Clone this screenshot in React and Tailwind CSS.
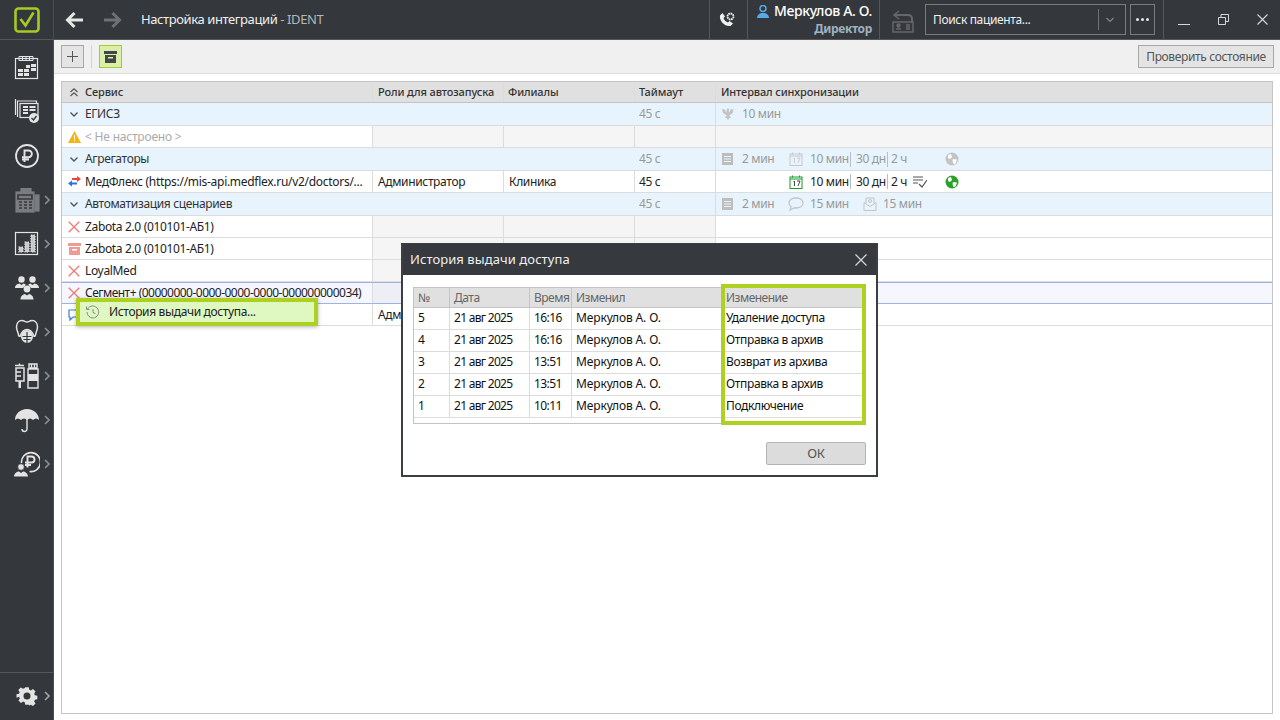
import React from 'react';

const Chev = ({ c = '#8a8d91' }) => (
  <svg width="6" height="10" viewBox="0 0 6 10" fill="none" stroke={c} strokeWidth="1.6"><path d="M1 1l4 4-4 4" /></svg>
);

const NavIcon = ({ children, arrow, dim }) => (
  <div className="h-[44px] relative flex items-center justify-center shrink-0 w-full">
    <div className={dim ? 'w-[26px] h-[26px] ml-[1px] opacity-40' : 'w-[26px] h-[26px] ml-[1px]'}>
      <svg width="26" height="26" viewBox="0 0 26 26" fill="none" stroke="#e4e4e4" strokeWidth="1.2">{children}</svg>
    </div>
    {arrow && <span className="absolute left-[44px] top-[17px]"><Chev /></span>}
  </div>
);

const Sidebar = () => (
  <div className="w-[54px] shrink-0 bg-[#34373c] border-r border-[#4a4d52] flex flex-col h-full">
    <div className="h-[40px] shrink-0 border-b border-[#54575b] flex items-center justify-center">
      <svg width="26" height="26" viewBox="0 0 26 26" fill="none">
        <rect x="1.5" y="1.5" width="23" height="23" rx="3" stroke="#a6cb24" strokeWidth="2.6" />
        <path d="M6.5 12l5 6.5 8-13" stroke="#a6cb24" strokeWidth="2.6" />
      </svg>
    </div>
    <div className="h-[6px] shrink-0" />
    <NavIcon>
      <rect x="1.5" y="3.5" width="22" height="20" />
      <path d="M5 1.500h14v4H5zM8.500 1.500v4M12 1.500v4M15.500 1.500v4" strokeWidth="1" />
      <path d="M12 10h4v3h-4zM17 9h5v3h-5zM4 14h5v3H4zM10 14h5v3h-5zM17 13h5v3h-5zM4 18h5v3H4zM10 18h5v3h-5z" fill="#e4e4e4" stroke="none" />
    </NavIcon>
    <NavIcon>
      <g transform="translate(0 -2)">
        <path d="M1.500 18V1.500h18M3.500 20V4h19v15" />
        <rect x="6" y="6.500" width="18" height="14" fill="#34373c" />
        <path d="M9 10h5M9 13h5M9 16h5M15.500 10h6M15.500 13h6" strokeWidth="1.800" />
        <circle cx="20" cy="21" r="5" fill="#e4e4e4" stroke="none" />
        <path d="M17.500 21l2 2 3-4" stroke="#34373c" strokeWidth="1.400" />
      </g>
    </NavIcon>
    <NavIcon>
      <circle cx="13" cy="13" r="11" strokeWidth="1.800" />
      <path d="M10.500 19V7.500h4a3.300 3.300 0 010 6.700H8M8 16.500h7" strokeWidth="1.900" />
    </NavIcon>
    <NavIcon arrow dim>
      <path d="M7 5V1.500h10V5" fill="#e4e4e4" />
      <rect x="2" y="5" width="18" height="20" fill="#e4e4e4" />
      <rect x="21" y="8" width="4" height="16" fill="#e4e4e4" />
      <path d="M4 8h14v4H4zM5 15h3M10 15h3M15 15h3M5 18h3M10 18h3M15 18h3M5 21h3M10 21h3M15 21h3" stroke="#34373c" strokeWidth="1.600" />
    </NavIcon>
    <NavIcon arrow>
      <rect x="1.500" y="1.500" width="22" height="22" />
      <path d="M5 16h4v5H5zM11 11h4v10h-4zM17 4h4v17h-4z" fill="#c8c8c8" stroke="#e4e4e4" strokeDasharray="1.500 1" />
    </NavIcon>
    <NavIcon arrow>
      <g fill="#e4e4e4" stroke="none">
        <circle cx="7.500" cy="4.500" r="3.200" /><path d="M1 13c0-3 2.500-4 4.500-4.500L7.500 10l2-1.500c1 .3 1.800.7 2.400 1.300L9 13z" />
        <circle cx="18.500" cy="4.500" r="3.200" /><path d="M25 13c0-3-2.500-4-4.500-4.500L18.500 10l-2-1.500c-1 .3-1.800.7-2.400 1.300L17 13z" />
        <circle cx="13" cy="14" r="3.400" /><path d="M6.500 24.500c0-3.500 2.500-5 4.500-5.500l2 1.500 2-1.500c2 .5 4.500 2 4.500 5.500z" />
      </g>
    </NavIcon>
    <NavIcon arrow>
      <path d="M8 1.500c2 0 3.500 1.500 5 1.500s3-1.500 5-1.500c3.500 0 5.500 3 5.500 6.500 0 3-1.500 5-2 8-.2 1-1 1.500-1.800 1-1-3-3-6.500-6.700-6.500S7.300 14 6.300 17c-.8.5-1.600 0-1.800-1-.5-3-2-5-2-8 0-3.500 2-6.500 5.500-6.500z" strokeWidth="1.500" />
      <ellipse cx="13" cy="17.500" rx="6" ry="6.500" fill="#e4e4e4" stroke="none" />
      <path d="M13 13v11M8.500 17.500h9M9.500 20.500h7" stroke="#34373c" />
    </NavIcon>
    <NavIcon arrow>
      <path d="M1 2.500h9M5.500 .5v2M2 5h8v13H2zM2 9h5M2 13h5" strokeWidth="1.500" />
      <path d="M4.500 18h2.500v7H4.500z" fill="#e4e4e4" stroke="none" />
      <path d="M15 1h8v4h-8zM14 6h10v19H14zM17.500 1v4M20.500 1v4" strokeWidth="1.400" />
      <rect x="14" y="11" width="10" height="7" fill="#e4e4e4" stroke="none" />
    </NavIcon>
    <NavIcon arrow>
      <path d="M13 2C6 2 1 7 1 13c2-2 4-2 6 0 2-2 4-2 6 0 2-2 4-2 6 0 2-2 4-2 6 0 0-6-5-11-12-11z" fill="#e4e4e4" stroke="none" />
      <path d="M13 12v10a2.500 2.500 0 01-5 0" strokeWidth="1.400" />
    </NavIcon>
    <NavIcon arrow>
      <path d="M7.500 12A9.500 9.500 0 1115.500 20.500" strokeWidth="1.600" />
      <path d="M13.500 16.500V5.500h4a3 3 0 010 6h-6.500M11 14h6" strokeWidth="1.900" />
      <circle cx="7" cy="16" r="3.200" fill="#e4e4e4" stroke="#34373c" strokeWidth=".6" />
      <path d="M0 25.500c0-3 3-5 5-5l2 1.500 2-1.500c2 0 5 2 5 5z" fill="#e4e4e4" stroke="none" />
    </NavIcon>
    <div className="mt-auto h-[48px] shrink-0 border-t border-[#54575b] relative flex items-center justify-center">
      <svg width="24" height="24" viewBox="0 0 24 24" className="ml-[1px] mt-[-1px]">
        <path fillRule="evenodd" fill="#e4e4e4" d="M10 2h4l.6 2.800 1.800.8 2.500-1.500 2.800 2.800-1.500 2.500.8 1.800 2.800.6v4l-2.800.6-.8 1.800 1.500 2.500-2.800 2.800-2.500-1.500-1.800.8L14 22h-4l-.6-2.800-1.800-.8-2.500 1.500-2.800-2.800 1.500-2.500-.8-1.800L0 14v-4l2.800-.6.8-1.800-1.500-2.500 2.800-2.800 2.500 1.500 1.800-.8zM12 8a4 4 0 100 8 4 4 0 000-8z" transform="translate(1.500 1.500) scale(.875)" />
      </svg>
      <span className="absolute left-[44px] top-[18px]"><Chev c="#a0a3a6" /></span>
    </div>
  </div>
);

const TopBar = () => (
  <div className="h-[40px] shrink-0 bg-[#34373c] border-b border-[#54575b] flex items-center text-white">
    <div className="w-[87px] shrink-0 flex items-center pl-[11px] gap-[21px]">
      <svg width="18" height="18" viewBox="0 0 18 18" fill="none" stroke="#e6e6e6" strokeWidth="3"><path d="M9.500 2L2.500 9l7 7M3 9h15" /></svg>
      <svg width="18" height="18" viewBox="0 0 18 18" fill="none" stroke="#6e7175" strokeWidth="3"><path d="M8.500 2l7 7-7 7M15 9H0" /></svg>
    </div>
    <div className="text-[13px] text-[#f0f0f0] whitespace-nowrap tracking-[-.4px]">Настройка интеграций<span className="text-[#b5b7b9]"> - IDENT</span></div>
    <div className="ml-auto flex items-center h-full">
      <div className="w-[39px] h-full border-l border-r border-[#54575b] flex items-center justify-center">
        <svg width="16" height="16" viewBox="0 0 16 16" className="mr-[3px]">
          <path d="M1 3.500L3.500 1l2.500 3.500-1.500 1.500c.5 2 2.500 4 4.500 4.500l1.500-1.500 3.500 2.500-2.500 2.500C6 15 0 9 1 3.500z" fill="#f0f0f0" />
          <circle cx="11.500" cy="4.500" r="3" fill="none" stroke="#f0f0f0" strokeWidth="1.800" strokeDasharray="1.700 .6" />
        </svg>
      </div>
      <div className="w-[132px] h-full border-r border-[#54575b] flex flex-col items-end pr-[7px] pt-[2px]">
        <div className="flex items-center gap-[5px] leading-[18px]">
          <svg width="12" height="13" viewBox="0 0 12 13" fill="#5aa9e6"><circle cx="6" cy="3.500" r="3" fill="none" stroke="#5aa9e6" strokeWidth="1.500" /><path d="M0 13c0-3 2-4 4-5h4c2 1 4 2 4 5z" /></svg>
          <span className="text-[14px] font-medium text-white tracking-[-.35px]">Меркулов А. О.</span>
        </div>
        <span className="text-[12px] font-bold text-[#9fb2bf] leading-[15px] mt-[1px] tracking-[-.35px]">Директор</span>
      </div>
      <div className="w-[45px] h-full flex items-center justify-center">
        <svg width="22" height="24" viewBox="0 0 22 24" fill="none" stroke="#64676b" strokeWidth="1.500" className="mt-[2px]">
          <path d="M7 2L2 6l5 4" /><path d="M2 6h14c3 0 4 2 4 4v4" strokeWidth="2" />
          <rect x="1" y="13" width="20" height="10" /><path d="M4 20h5M14 16h4M14 18h4M14 20h4" /><circle cx="6.500" cy="16.500" r="1.500" fill="#64676b" />
        </svg>
      </div>
      <div className="w-[201px] h-[31px] border border-[#7a7d80] flex items-center mr-[4px] pl-[7px]">
        <span className="text-[12px] text-[#f0f0f0] flex-1 whitespace-nowrap">Поиск пациента...</span>
        <div className="w-[22px] h-[21px] border-l border-[#6d7074] flex items-center justify-center">
          <svg width="8" height="6" viewBox="0 0 8 6" fill="none" stroke="#85888b" strokeWidth="1.200"><path d="M.5 1l3.500 3.500L7.500 1" /></svg>
        </div>
        <div className="w-[5px]" />
      </div>
      <div className="w-[25px] h-[31px] border border-[#7a7d80] flex items-center justify-center gap-[2px] mr-[8px]">
        <i className="w-[3px] h-[3px] bg-[#e6e6e6] rounded-full" /><i className="w-[3px] h-[3px] bg-[#e6e6e6] rounded-full" /><i className="w-[3px] h-[3px] bg-[#e6e6e6] rounded-full" />
      </div>
      <div className="w-[117px] h-full border-l border-[#54575b] flex items-center pl-[14px] gap-[28px]">
        <div className="w-[12px] h-[1px] bg-[#d8d8d8] mt-[10px]" />
        <svg width="11" height="11" viewBox="0 0 11 11" fill="none" stroke="#d8d8d8"><path d="M.5 3.500h7v7h-7zM3 3.500V.5h7.500v7H7.500" /></svg>
        <svg width="11" height="11" viewBox="0 0 11 11" fill="none" stroke="#d8d8d8" strokeWidth="1.100"><path d="M.5.5l10 10M10.500.5l-10 10" /></svg>
      </div>
    </div>
  </div>
);

const Toolbar = () => (
  <div className="h-[34px] shrink-0 bg-[#f0f0f0] border-b border-[#dcdcdc] flex items-center pl-[7px] pr-[6px]">
    <div className="w-[23px] h-[23px] border border-[#a8a8a8] bg-[#e4e4e4] flex items-center justify-center">
      <svg width="11" height="11" viewBox="0 0 11 11" stroke="#555" fill="none"><path d="M5.500 0v11M0 5.500h11" /></svg>
    </div>
    <div className="w-[1px] h-[23px] bg-[#d2d2d2] ml-[7px] mr-[7px]" />
    <div className="w-[23px] h-[23px] border border-[#a9cc2b] bg-[#dcefa8] flex items-center justify-center">
      <svg width="13" height="12" viewBox="0 0 13 12"><rect width="13" height="3" fill="#44474a" /><path fillRule="evenodd" d="M1 4h11v8H1zM4 6v1.500h5V6z" fill="#44474a" /></svg>
    </div>
    <button className="ml-auto w-[136px] h-[23px] border border-[#a8a8a8] bg-[#e4e4e4] text-[12px] text-[#555] whitespace-nowrap">Проверить состояние</button>
  </div>
);

const G = ({ children, w = 14, h = 14, c = '#bdbdbd' }) => (
  <svg width={w} height={h} viewBox="0 0 14 14" fill="none" stroke={c} className="shrink-0">{children}</svg>
);
const DocI = () => <G><rect x="1" y="1" width="11" height="12" fill="#bdbdbd" stroke="none" /><path d="M3 4.500h7M3 7h7M3 9.500h7" stroke="#eaf5fd" /></G>;
const CalI = ({ c = '#c8c8c8' }) => <G c={c}><rect x="1" y="2" width="12" height="11.500" /><path d="M3.500 .5v2M10.500 .5v2M1 4h12" /><path d="M4.500 7l1-1v5M8 6h3l-2 5" strokeWidth=".9" stroke={c === '#c8c8c8' ? '#c8c8c8' : '#333'} /></G>;
const GlobeI = ({ c = '#c4c4c4' }) => (
  <svg width="14" height="14" viewBox="0 0 14 14" className="shrink-0"><circle cx="7" cy="7" r="6.500" fill={c} /><path d="M3 3l3-1 1 3-2 2-2-1zM8 7l4 .5-1.500 4-2 .5-1-3z" fill="#fff" /></svg>
);
const Sep = () => <span className="block w-[1px] h-[15px] bg-[#bdbdbd] shrink-0" />;

const Col = ({ w, children, className = '' }) => (
  <div className={`shrink-0 h-full border-r border-[#dcdcdc] px-[5px] flex items-center whitespace-nowrap overflow-hidden ${className}`} style={{ width: w }}>{children}</div>
);

const W = [311, 131, 131, 81];

const GroupRow = ({ label, h = 23, children }) => (
  <div className="flex bg-[#e8f4fd] border-b border-[#dcdcdc] text-[#333] shrink-0" style={{ height: h }}>
    <Col w={W[0] + W[1] + W[2]} className="border-r-0 !px-0">
      <svg width="8" height="5" viewBox="0 0 8 5" fill="none" stroke="#555" strokeWidth="1.400" className="ml-[8px] mr-[7px]"><path d="M.5.5L4 4 7.500.5" /></svg>
      <span>{label}</span>
    </Col>
    <Col w={W[3]} className="text-[#999] !pl-[4px]">45 с</Col>
    <div className="flex-1 flex items-center pl-[5px] text-[#999] whitespace-nowrap">{children}</div>
  </div>
);

const IconCell = ({ children }) => <span className="w-[16px] ml-[4px] mr-[3px] flex items-center justify-center shrink-0">{children}</span>;

const X = () => <svg width="12" height="12" viewBox="0 0 12 12" stroke="#ee7a72" strokeWidth="1.300" fill="none"><path d="M.7.7l10.600 10.600M11.300.7L.7 11.300" /></svg>;

const DataRow = ({ icon, label, h = 22, role, branch, tmo, gray, children, sel, labelClass = 'text-[#222]' }) => (
  <div className={`flex shrink-0 text-[#222] ${sel ? 'bg-[#f5f6fe] border-y border-[#9fb1e6] ' : 'border-b border-[#dcdcdc]'}`} style={{ height: h }}>
    <Col w={W[0]} className={`!px-0 ${labelClass}`}><IconCell>{icon}</IconCell><span>{label}</span></Col>
    <Col w={W[1]} className={gray ? (sel ? 'bg-[#eeeef5]' : 'bg-[#f5f5f5]') : ''}>{role}</Col>
    <Col w={W[2]} className={gray ? (sel ? 'bg-[#eeeef5]' : 'bg-[#f5f5f5]') : ''}>{branch}</Col>
    <Col w={W[3]} className={`!pl-[4px] ${gray ? (sel ? 'bg-[#eeeef5]' : 'bg-[#f5f5f5]') : ''}`}>{tmo}</Col>
    <div className={`flex-1 flex items-center pl-[5px] whitespace-nowrap ${gray === 'all' ? 'bg-[#f5f5f5]' : ''}`}>{children}</div>
  </div>
);

const Interval = ({ dark }) => (
  <>
    <span className="w-[68px] shrink-0 flex items-center">{!dark && <><DocI /><span className="ml-[7px]">2 мин</span></>}</span>
    <CalI c={dark ? '#1f9a2e' : '#c8c8c8'} />
    <span className="ml-[7px] w-[40px] shrink-0">10 мин</span>
    <Sep />
    <span className="ml-[5px] w-[31px] shrink-0">30 дн</span>
    <Sep />
    <span className="ml-[3px] w-[22px] shrink-0">2 ч</span>
    <span className="w-[32px] shrink-0 flex">
      {dark && (
        <svg width="14" height="12" viewBox="0 0 14 12" fill="none" stroke="#555" strokeWidth="1.200"><path d="M0 1h10M0 4h10M0 7h5M6 8l3 3 5-7" /></svg>
      )}
    </span>
    <GlobeI c={dark ? '#2ba02b' : '#c4c4c4'} />
  </>
);

const Table = () => (
  <div className="mx-[7px] mt-[7px] mb-[6px] flex-1 border border-[#c4c4c4] flex flex-col text-[12px] overflow-hidden">
    <div className="h-[21px] shrink-0 bg-[#e0e0e0] border-b border-[#c4c4c4] flex text-[#333] text-[11px] font-medium tracking-[-.12px]">
      <Col w={W[0]} className="border-[#c8c8c8] !px-0">
        <svg width="8" height="9" viewBox="0 0 8 9" fill="none" stroke="#555" strokeWidth="1.200" className="ml-[8px] mr-[7px]"><path d="M.5 4L4 .8 7.500 4M.5 8L4 4.800 7.500 8" /></svg>
        Сервис
      </Col>
      <Col w={W[1]} className="border-[#c8c8c8]">Роли для автозапуска</Col>
      <Col w={W[2]} className="border-[#c8c8c8] !pl-[4px]">Филиалы</Col>
      <Col w={W[3]} className="border-[#c8c8c8] !pl-[4px]">Таймаут</Col>
      <div className="flex-1 flex items-center pl-[5px]">Интервал синхронизации</div>
    </div>
    <GroupRow label="ЕГИСЗ">
      <svg width="14" height="14" viewBox="0 0 14 14" className="shrink-0" fill="#c4c4c4"><path d="M1 2l3 .5.500 2 1 .5V3.500L6 2l1-1 1 1-.100 1.500v1.500l1-.500.500-2 3-.5-.5 4-2 1.500-1.500.5.5 1.500 1.500 1L8.500 11 7 13 5.500 11 3.500 10.500l1.500-1 .5-1.500L4 7.500 2 6z" /></svg>
      <span className="ml-[7px]">10 мин</span>
    </GroupRow>
    <DataRow gray="all" labelClass="text-[#aaa] tracking-[-.2px]" icon={<svg width="13" height="12" viewBox="0 0 13 12"><path d="M6.500 0L13 12H0z" fill="#f5b50f" /><path d="M6 4h1v4.500H6zM6 9.500h1v1H6z" fill="#fff" /></svg>} label="< Не настроено >" />
    <GroupRow label="Агрегаторы"><Interval /></GroupRow>
    <DataRow
      icon={<svg width="13" height="11" viewBox="0 0 13 11"><path d="M4 2h5V0l4 3-4 3V4H4z" fill="#e8463c" /><path d="M9 6.500H4v-2L0 7.500l4 3v-2h5z" fill="#2f6fe0" /></svg>}
      labelClass="text-[#222] tracking-[-.29px]"
      label="МедФлекс (https://mis-api.medflex.ru/v2/doctors/..."
      role="Администратор" branch="Клиника" tmo="45 с"
    ><Interval dark /></DataRow>
    <GroupRow label="Автоматизация сценариев">
      <DocI /><span className="ml-[7px] w-[46px] shrink-0">2 мин</span>
      <svg width="16" height="14" viewBox="0 0 16 14" fill="none" stroke="#c4c4c4" strokeWidth="1.300" className="shrink-0"><path d="M8 1c4 0 7 2 7 5s-3 5-7 5H6l-4 2 1-3.500C1.500 8.500 1 7.500 1 6c0-3 3-5 7-5z" /></svg>
      <span className="ml-[6px] w-[53px] shrink-0">15 мин</span>
      <svg width="14" height="14" viewBox="0 0 14 14" fill="none" stroke="#c4c4c4" className="shrink-0"><path d="M1 5.500l6 4 6-4v8H1z" /><path d="M3 6V1h8v5" /><circle cx="7" cy="4" r="1.500" /></svg>
      <span className="ml-[6px]">15 мин</span>
    </GroupRow>
    <DataRow gray icon={<X />} label="Zabota 2.0 (010101-АБ1)" />
    <DataRow gray icon={<svg width="13" height="12" viewBox="0 0 13 12"><rect width="13" height="3" fill="#f09a94" /><path fillRule="evenodd" d="M1 4h11v8H1zM4 6v1.500h5V6z" fill="#f09a94" /></svg>} label="Zabota 2.0 (010101-АБ1)" />
    <DataRow gray icon={<X />} label="LoyalMed" />
    <DataRow gray sel labelClass="text-[#222] tracking-[-.52px]" icon={<X />} label="Сегмент+ (00000000-0000-0000-0000-000000000034)" />
    <DataRow
      icon={<svg width="13" height="12" viewBox="0 0 13 12" fill="none" stroke="#3b7dd8" strokeWidth="1.200"><path d="M1 1h11v7H5l-3 3V8H1z" /></svg>}
      label="" role="Адм"
    />
  </div>
);

const ContextMenu = () => (
  <div className="absolute left-[76px] top-[298px] w-[242px] h-[28px] bg-[#dff8c2] border-[4px] border-[#aed021] flex items-center text-[12px] text-[#222] shadow-[0_1px_4px_rgba(0,0,0,.3)]">
    <svg width="14" height="14" viewBox="0 0 14 14" fill="none" stroke="#8a8a8a" className="ml-[6px]"><path d="M1.500 4A6 6 0 117 13a6 6 0 01-6-6" /><path d="M.5 1.500v3h3M7 4v3.500l2.500 1" /></svg>
    <span className="ml-[9px]">История выдачи доступа...</span>
  </div>
);

const M = [36, 80, 42, 151];
const Cell = ({ w, children, head, className = '' }) => (
  <div className={`shrink-0 h-full border-r ${head ? 'border-[#c4c4c4]' : 'border-[#dcdcdc]'} pl-[4px] flex items-center whitespace-nowrap overflow-hidden ${className}`} style={{ width: w }}>{children}</div>
);

const rows = [
  ['5', '21 авг 2025', '16:16', 'Удаление доступа'],
  ['4', '21 авг 2025', '16:16', 'Отправка в архив'],
  ['3', '21 авг 2025', '13:51', 'Возврат из архива'],
  ['2', '21 авг 2025', '13:51', 'Отправка в архив'],
  ['1', '21 авг 2025', '10:11', 'Подключение'],
];

const Modal = () => (
  <div className="absolute left-[401px] top-[243px] w-[477px] h-[234px] bg-white border-2 border-[#3b3e43] flex flex-col text-[12px]">
    <div className="h-[31px] shrink-0 bg-[#36393e] flex items-center pl-[7px] pr-[9px] mt-[-1px]">
      <span className="text-[13px] text-[#f0f0f0] tracking-[.08px]">История выдачи доступа</span>
      <svg width="12" height="12" viewBox="0 0 12 12" stroke="#d8d8d8" strokeWidth="1.200" fill="none" className="ml-auto"><path d="M.5.5l11 11M11.500.5l-11 11" /></svg>
    </div>
    <div className="relative mx-[10px] mt-[12px] h-[137px] border border-[#c4c4c4] flex flex-col">
      <div className="h-[20px] shrink-0 flex bg-[#e0e0e0] border-b border-[#c4c4c4] text-[#666] tracking-[-.5px]">
        <Cell head w={M[0]}>№</Cell><Cell head w={M[1]}>Дата</Cell><Cell head w={M[2]}>Время</Cell><Cell head w={M[3]}>Изменил</Cell>
        <div className="pl-[3px] flex items-center">Изменение</div>
      </div>
      {rows.map((r, i) => (
        <div key={i} className="h-[22px] shrink-0 flex border-b border-[#dcdcdc] text-[#111]">
          <Cell w={M[0]} className="pb-[2px]">{r[0]}</Cell>
          <Cell w={M[1]} className="pb-[2px] tracking-[-.7px]">{r[1]}</Cell>
          <Cell w={M[2]} className="pb-[2px] tracking-[-.6px]">{r[2]}</Cell>
          <Cell w={M[3]} className="pb-[2px] tracking-[-.13px]">Меркулов А. О.</Cell>
          <div className="pl-[3px] pb-[2px] flex items-center whitespace-nowrap">{r[3]}</div>
        </div>
      ))}
      <div className="absolute left-[307px] top-[-4px] w-[145px] h-[141px] border-[4px] border-[#aed021]" />
    </div>
    <button className="self-end mt-[18px] mr-[10px] w-[100px] h-[23px] bg-[#dcdcdc] border border-[#b4b4b4] rounded-[2px] text-[#555] text-[13px]">ОК</button>
  </div>
);

export default function App() {
  return (
    <div className="relative w-[1280px] h-[720px] overflow-hidden flex bg-white tracking-[-.35px]" style={{ fontFamily: '"Noto Sans", "Open Sans", sans-serif' }}>
      <Sidebar />
      <div className="flex-1 flex flex-col min-w-0">
        <TopBar />
        <Toolbar />
        <Table />
      </div>
      <ContextMenu />
      <Modal />
    </div>
  );
}
